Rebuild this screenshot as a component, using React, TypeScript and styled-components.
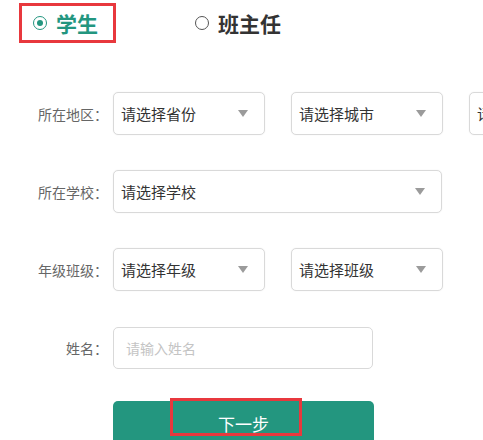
import * as React from 'react'
import styled, { createGlobalStyle } from 'styled-components'

const GlobalStyle = createGlobalStyle`
  html, body {
    margin: 0;
    padding: 0;
    background: #fff;
    font-family: "Liberation Sans", "Noto Sans CJK SC", sans-serif;
  }
`

const TEAL = '#23967f'
const MARK = '#e8383d'

const Page = styled.div`
  width: 483px;
  height: 440px;
  overflow: hidden;
  position: relative;
`

const Tabs = styled.div`
  display: flex;
  align-items: center;
  height: 40px;
  padding: 3px 0 0 19px;
`

const Tab = styled.div<{ $active?: boolean; $marked?: boolean }>`
  display: flex;
  align-items: center;
  gap: 9px;
  box-sizing: border-box;
  height: 40px;
  padding: 0 0 0 ${p => (p.$marked ? 11 : 0)}px;
  width: ${p => (p.$marked ? '97px' : 'auto')};
  margin-right: ${p => (p.$marked ? 79 : 0)}px;
  border: ${p => (p.$marked ? `3px solid ${MARK}` : 'none')};
  color: ${p => (p.$active ? TEAL : '#333')};
  font-size: 21px;
  font-weight: 700;
  font-family: "Noto Sans CJK SC", sans-serif;
`

const Radio = styled.span<{ $checked?: boolean }>`
  position: relative;
  box-sizing: border-box;
  width: 14px;
  height: 14px;
  border-radius: 50%;
  border: 1.5px solid ${p => (p.$checked ? TEAL : '#555')};
  flex: 0 0 auto;

  &::after {
    content: '';
    display: ${p => (p.$checked ? 'block' : 'none')};
    position: absolute;
    left: 50%;
    top: 50%;
    width: 6px;
    height: 6px;
    margin: -3px 0 0 -3px;
    border-radius: 50%;
    background: ${TEAL};
  }
`

const Form = styled.div`
  display: flex;
  flex-direction: column;
  gap: 35px;
  padding-top: 49px;
`

const Row = styled.div`
  display: flex;
  align-items: center;
  height: 43px;
`

const Label = styled.div`
  width: 113px;
  flex: 0 0 auto;
  text-align: right;
  padding-right: 5px;
  box-sizing: border-box;
  color: #666;
  font-size: 14px;
  font-family: "Noto Sans CJK SC", sans-serif;
  white-space: nowrap;
`

const Fields = styled.div`
  display: flex;
  gap: 26px;
`

const SelectBox = styled.div<{ $width: number }>`
  display: flex;
  align-items: center;
  justify-content: space-between;
  box-sizing: border-box;
  width: ${p => p.$width}px;
  height: 43px;
  padding: 0 16px 0 7px;
  border: 1px solid #d9d9d9;
  border-radius: 5px;
  box-shadow: 0 0 2px rgba(0, 0, 0, 0.06);
  background: #fff;
  flex: 0 0 auto;
  color: #333;
  font-size: 15px;
  font-family: "Noto Sans CJK SC", sans-serif;
  white-space: nowrap;
  overflow: hidden;
`

const Caret = styled.span`
  width: 0;
  height: 0;
  border-left: 5px solid transparent;
  border-right: 5px solid transparent;
  border-top: 7px solid #9b9b9b;
  flex: 0 0 auto;
`

const TextInput = styled.div`
  display: flex;
  align-items: center;
  box-sizing: border-box;
  width: 260px;
  height: 42px;
  padding: 0 12px;
  border: 1px solid #d9d9d9;
  border-radius: 5px;
  color: #c4c4c4;
  font-size: 14px;
  font-family: "Noto Sans CJK SC", sans-serif;
`

const ButtonRow = styled.div`
  padding: 32px 0 0 113px;
`

const NextButton = styled.div`
  position: relative;
  width: 261px;
  height: 44px;
  border-radius: 5px 5px 0 0;
  background: ${TEAL};
  color: #fff;
  font-size: 17px;
  font-family: "Noto Sans CJK SC", sans-serif;
  display: flex;
  align-items: center;
  justify-content: center;
`

const MarkBox = styled.span`
  position: absolute;
  left: 57px;
  top: -3px;
  width: 132px;
  height: 38px;
  box-sizing: border-box;
  border: 3px solid ${MARK};
`

const Select = (props: { text: string; width?: number }) => (
  <SelectBox $width={props.width ?? 152}>
    <span>{props.text}</span>
    <Caret />
  </SelectBox>
)

export default function App() {
  return (
    <Page>
      <GlobalStyle />
      <Tabs>
        <Tab $active $marked>
          <Radio $checked />
          学生
        </Tab>
        <Tab>
          <Radio />
          班主任
        </Tab>
      </Tabs>
      <Form>
        <Row>
          <Label>所在地区：</Label>
          <Fields>
            <Select text="请选择省份" />
            <Select text="请选择城市" />
            <Select text="请选择区县" />
          </Fields>
        </Row>
        <Row>
          <Label>所在学校：</Label>
          <Select text="请选择学校" width={329} />
        </Row>
        <Row>
          <Label>年级班级：</Label>
          <Fields>
            <Select text="请选择年级" />
            <Select text="请选择班级" />
          </Fields>
        </Row>
        <Row>
          <Label>姓名：</Label>
          <TextInput>请输入姓名</TextInput>
        </Row>
      </Form>
      <ButtonRow>
        <NextButton>
          下一步
          <MarkBox />
        </NextButton>
      </ButtonRow>
    </Page>
  )
}
